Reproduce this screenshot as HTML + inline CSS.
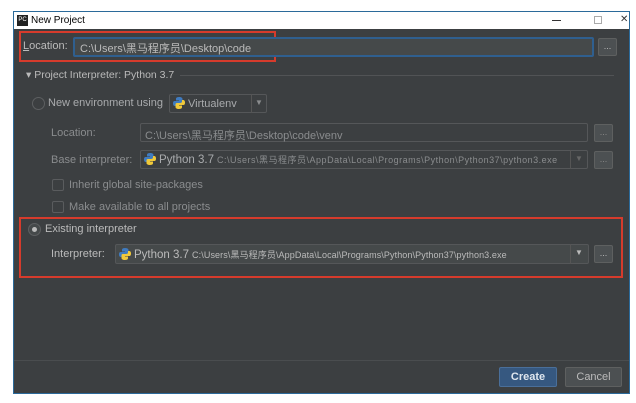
<!DOCTYPE html>
<html><head><meta charset="utf-8"><style>
*{box-sizing:border-box;margin:0;padding:0}
body{width:636px;height:403px;background:#fff;position:relative;overflow:hidden;font-family:"Liberation Sans","Noto Sans CJK SC",sans-serif;font-size:11px;color:#bbbbbb}
.a{position:absolute;white-space:nowrap}
.win{left:13px;top:11px;width:617px;height:383px;border:1px solid #2b6a9a;background:#3c3f41}
.title{left:14px;top:12px;width:615px;height:17px;background:#fff;color:#000;font-size:10px}
.field{border:1px solid #555759;background:#3c3f41;border-radius:2px}
.btn{border:1px solid #5e6060;background:#4c5052;border-radius:2px;color:#bbb;font-size:9px;text-align:center;line-height:14px}
.dim{color:#8a8c8e}
.small{font-size:9px}
.py{display:inline-block;width:12px;height:12px;vertical-align:-2px;margin-right:3px}
.red{border:2px solid #d63b2c}
.cb{width:12px;height:12px;border:1px solid #5a5c5e;border-radius:2px}
</style></head><body>
<div class="a win"></div>
<div class="a title">
 <div class="a" style="left:3px;top:3px;width:11px;height:11px;background:#222;color:#fff;font-size:6px;line-height:11px;text-align:center">PC</div>
 <div class="a" style="left:17px;top:3px">New Project</div>
 <div class="a" style="left:538px;top:8px;width:9px;height:1px;background:#333"></div>
 <div class="a" style="left:580px;top:4px;width:8px;height:8px;border:1px solid #aaa"></div>
 <div class="a" style="left:606px;top:2px;font-size:10px;color:#333">✕</div>
</div>
<!-- location -->
<div class="a red" style="left:19px;top:31px;width:257px;height:31px"></div>
<div class="a" style="left:23px;top:40px;color:#bbb"><u>L</u>ocation:</div>
<div class="a" style="left:73px;top:37px;width:521px;height:20px;border:2px solid #2f5f8f;background:#45494a;border-radius:2px"></div>
<div class="a" style="left:80px;top:40px;color:#bbb">C:\Users\黑马程序员\Desktop\code</div>
<div class="a btn" style="left:598px;top:38px;width:19px;height:18px">...</div>
<!-- header -->
<div class="a" style="left:26px;top:69px;font-size:10.5px">▾ Project Interpreter: Python 3.7</div>
<div class="a" style="left:180px;top:75px;width:434px;height:1px;background:#515355"></div>
<!-- new env -->
<div class="a" style="left:32px;top:97px;width:13px;height:13px;border:1px solid #5d5f61;border-radius:50%"></div>
<div class="a dim" style="left:48px;top:97px;color:#a9abad">New environment using</div>
<div class="a field" style="left:169px;top:94px;width:98px;height:19px"></div>
<div class="a" style="left:251px;top:94px;width:1px;height:19px;background:#555"></div>
<div class="a dim" style="left:255px;top:98px;font-size:8px">▼</div>
<div class="a" style="left:173px;top:97px;color:#a9abad"><svg class="py" viewBox="0 0 12 12"><path d="M6 0C3 0 3 1.5 3 2v1.5h3v.5H1.5C0 4 0 6 0 6.5 0 8.5 1 9 2 9h1V7.5C3 6.5 4 6 5 6h3c1 0 1.5-.5 1.5-1.5V2C9.5 1 8.5 0 6 0z" fill="#3f7bc0"/><path d="M6 12c3 0 3-1.5 3-2V8.5H6V8h4.5c1.5 0 1.5-2 1.5-2.5 0-2-1-2.5-2-2.5H9v1.5C9 5.5 8 6 7 6H4c-1 0-1.5.5-1.5 1.5V10c0 1 1 2 3.5 2z" fill="#f0c93a"/></svg>Virtualenv</div>
<div class="a dim" style="left:51px;top:127px">Location:</div>
<div class="a field" style="left:140px;top:123px;width:448px;height:19px"></div>
<div class="a dim" style="left:145px;top:127px">C:\Users\黑马程序员\Desktop\code\venv</div>
<div class="a btn" style="left:594px;top:124px;width:19px;height:18px;color:#888">...</div>
<div class="a dim" style="left:51px;top:154px">Base interpreter:</div>
<div class="a field" style="left:140px;top:150px;width:448px;height:19px"></div>
<div class="a" style="left:570px;top:150px;width:1px;height:19px;background:#555"></div>
<div class="a dim" style="left:575px;top:154px;font-size:8px;color:#666">▼</div>
<div class="a dim" style="left:144px;top:153px"><svg class="py" viewBox="0 0 12 12"><path d="M6 0C3 0 3 1.5 3 2v1.5h3v.5H1.5C0 4 0 6 0 6.5 0 8.5 1 9 2 9h1V7.5C3 6.5 4 6 5 6h3c1 0 1.5-.5 1.5-1.5V2C9.5 1 8.5 0 6 0z" fill="#3f7bc0"/><path d="M6 12c3 0 3-1.5 3-2V8.5H6V8h4.5c1.5 0 1.5-2 1.5-2.5 0-2-1-2.5-2-2.5H9v1.5C9 5.5 8 6 7 6H4c-1 0-1.5.5-1.5 1.5V10c0 1 1 2 3.5 2z" fill="#f0c93a"/></svg><span style="color:#a9abad;font-size:11.5px">Python 3.7</span> <span class="small" style="letter-spacing:0.5px">C:\Users\黑马程序员\AppData\Local\Programs\Python\Python37\python3.exe</span></div>
<div class="a btn" style="left:594px;top:151px;width:19px;height:18px;color:#888">...</div>
<div class="a cb" style="left:52px;top:179px"></div>
<div class="a dim" style="left:69px;top:179px">Inherit global site-packages</div>
<div class="a cb" style="left:52px;top:201px"></div>
<div class="a dim" style="left:69px;top:201px">Make available to all projects</div>
<!-- existing -->
<div class="a red" style="left:19px;top:217px;width:604px;height:61px"></div>
<div class="a" style="left:28px;top:223px;width:13px;height:13px;border:1px solid #5d5f61;border-radius:50%;background:#45494a"></div>
<div class="a" style="left:32px;top:227px;width:5px;height:5px;border-radius:50%;background:#bbb"></div>
<div class="a" style="left:45px;top:223px">Existing interpreter</div>
<div class="a" style="left:51px;top:248px">Interpreter:</div>
<div class="a field" style="left:115px;top:244px;width:474px;height:20px;background:#45494a"></div>
<div class="a" style="left:570px;top:244px;width:1px;height:20px;background:#555"></div>
<div class="a" style="left:575px;top:248px;font-size:8px">▼</div>
<div class="a" style="left:119px;top:248px"><svg class="py" viewBox="0 0 12 12"><path d="M6 0C3 0 3 1.5 3 2v1.5h3v.5H1.5C0 4 0 6 0 6.5 0 8.5 1 9 2 9h1V7.5C3 6.5 4 6 5 6h3c1 0 1.5-.5 1.5-1.5V2C9.5 1 8.5 0 6 0z" fill="#3f7bc0"/><path d="M6 12c3 0 3-1.5 3-2V8.5H6V8h4.5c1.5 0 1.5-2 1.5-2.5 0-2-1-2.5-2-2.5H9v1.5C9 5.5 8 6 7 6H4c-1 0-1.5.5-1.5 1.5V10c0 1 1 2 3.5 2z" fill="#f0c93a"/></svg><span style="font-size:11.5px">Python 3.7</span> <span class="small" style="letter-spacing:0.1px">C:\Users\黑马程序员\AppData\Local\Programs\Python\Python37\python3.exe</span></div>
<div class="a btn" style="left:594px;top:245px;width:19px;height:18px">...</div>
<!-- footer -->
<div class="a" style="left:14px;top:360px;width:615px;height:1px;background:#4a4d4f"></div>
<div class="a" style="left:499px;top:367px;width:58px;height:20px;background:#365880;border:1px solid #4a6f9a;border-radius:2px;color:#dfe6ee;font-weight:bold;text-align:center;line-height:18px">Create</div>
<div class="a" style="left:565px;top:367px;width:57px;height:20px;background:#4c5052;border:1px solid #5e6060;border-radius:2px;color:#bbb;text-align:center;line-height:18px">Cancel</div>
</body></html>
